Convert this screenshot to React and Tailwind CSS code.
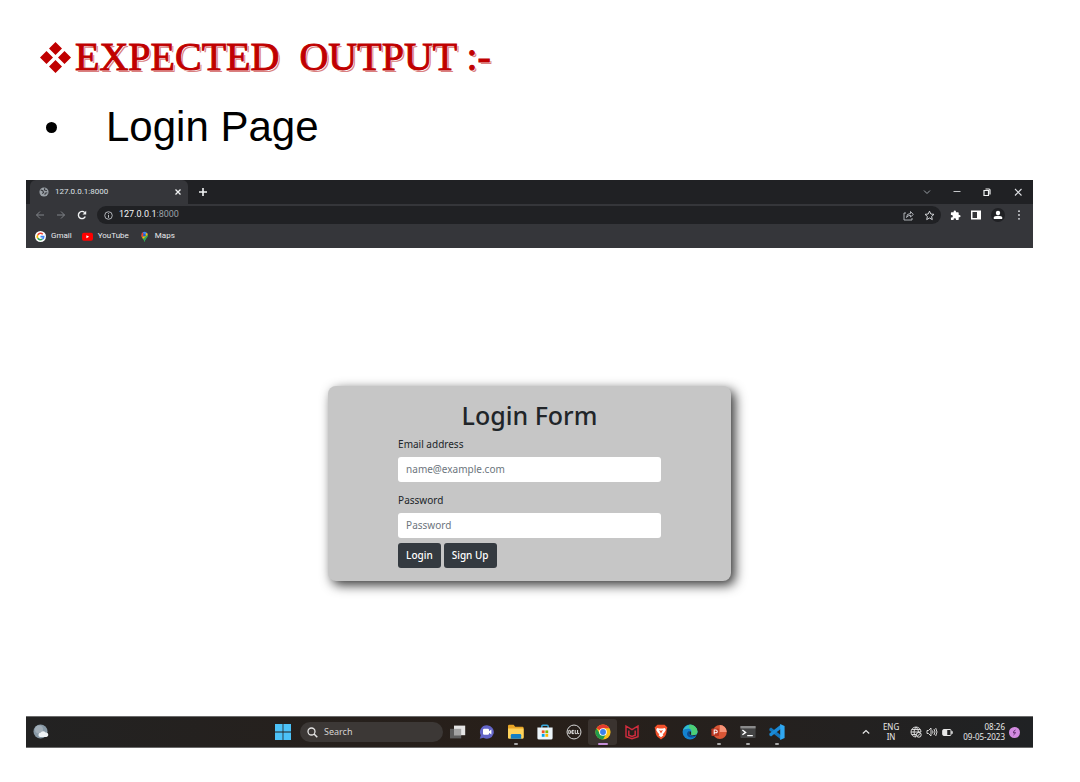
import React from "react";

function Svg({ size = 16, box = 24, children, className = "" }) {
  return (
    <svg width={size} height={size} viewBox={`0 0 ${box} ${box}`} className={`block shrink-0 ${className}`} fill="none" aria-hidden="true">
      {children}
    </svg>
  );
}

function IconButton({ label, className = "", children }) {
  return (
    <button type="button" aria-label={label} className={`flex shrink-0 items-center justify-center ${className}`}>
      {children}
    </button>
  );
}

function Heading() {
  return (
    <header className="pl-[14px]">
      <h1 className="flex items-center gap-1 whitespace-pre font-['Liberation_Serif',serif] text-[40px] leading-[44px] text-[#c00000] [-webkit-text-stroke:1px_#c00000] [text-shadow:1px_1px_0_#fff,2px_2px_0_#d98080]">
        <Svg size={31} box={31}>
          <path fill="#c00000" d="M15.500 0L22 6.500 15.500 13 9 6.500zM6.500 9L13 15.500 6.500 22 0 15.500zM24.500 9L31 15.500 24.500 22 18 15.500zM15.500 18L22 24.500 15.500 31 9 24.500z" />
        </Svg>
        <span>{"EXPECTED  OUTPUT :-"}</span>
      </h1>
      <ul className="mt-6 font-['Liberation_Sans',sans-serif] text-[42px] leading-[48px] text-black">
        <li className="flex items-center gap-[49px] pl-[6px]">
          <span className="size-[11px] rounded-full bg-black" />
          Login Page
        </li>
      </ul>
    </header>
  );
}

function TabStrip() {
  return (
    <div className="flex h-6 items-stretch bg-[#202124] pl-1 text-[#dfe1e5]">
      <div className="flex w-[158px] items-center rounded-t-md bg-[#35363a] pr-[6px] pl-[9px]">
        <Svg size={10}>
          <circle cx="12" cy="12" r="11" fill="#9aa0a6" />
          <path d="M4 7l5 2 2 4-3 3M14 3l-1 4 6 2M20 14l-5 1-1 4" stroke="#35363a" strokeWidth="2.500" />
        </Svg>
        <span className="ml-[6px] flex-1 text-[8px]">127.0.0.1:8000</span>
        <IconButton label="Close tab">
          <Svg size={8} box={8}><path d="M1.500 1.500l5 5M6.500 1.500l-5 5" stroke="#f1f3f4" strokeWidth="1.300" /></Svg>
        </IconButton>
      </div>
      <IconButton label="New tab" className="ml-[10px]">
        <Svg size={10} box={10}><path d="M5 1v8M1 5h8" stroke="#f1f3f4" strokeWidth="1.600" /></Svg>
      </IconButton>
      <div className="ml-auto flex items-center pr-[11px]">
        <IconButton label="Search tabs" className="w-[30px]">
          <Svg size={8} box={8}><path d="M1 2.500l3 3 3-3" stroke="#9aa0a6" /></Svg>
        </IconButton>
        <IconButton label="Minimise" className="w-[30px]">
          <Svg size={8} box={8}><path d="M0.500 3.500h7" stroke="#c4c6c9" /></Svg>
        </IconButton>
        <IconButton label="Restore" className="w-[30px]">
          <Svg size={8} box={8}><path d="M1 2.500h4.500v5H1zM2.500 1h3.500q1 0 1 1v4.500" stroke="#f1f3f4" strokeWidth="1.200" /></Svg>
        </IconButton>
        <IconButton label="Close window" className="ml-[12px] w-2">
          <Svg size={8} box={8}><path d="M1 1l6.500 6.500M7.500 1L1 7.500" stroke="#dfe1e5" strokeWidth="1.100" /></Svg>
        </IconButton>
      </div>
    </div>
  );
}

function Toolbar() {
  return (
    <div className="flex h-[22px] items-center pr-[9px] pl-[9px]">
      <div className="flex w-[62px] justify-between pr-[10px]">
        <IconButton label="Back">
          <Svg size={10} box={10}><path d="M9 5H1.500M5 1.500L1.500 5 5 8.500" stroke="#808388" /></Svg>
        </IconButton>
        <IconButton label="Forward">
          <Svg size={10} box={10}><path d="M1 5h7.500M5 1.500L8.500 5 5 8.500" stroke="#808388" /></Svg>
        </IconButton>
        <IconButton label="Reload">
          <Svg size={10} box={10}>
            <path d="M8.300 6.500A3.600 3.600 0 1 1 7.700 2.600" stroke="#f1f3f4" strokeWidth="1.400" />
            <path d="M9.200 0.800v3.700H5.500z" fill="#f1f3f4" />
          </Svg>
        </IconButton>
      </div>
      <div className="flex h-[18px] min-w-0 flex-1 items-center rounded-full bg-[#202124] pr-[6px] pl-[7px]">
        <Svg size={9} box={10}>
          <circle cx="5" cy="5" r="4.200" stroke="#bdc1c6" />
          <path d="M5 4.500v3M5 2.500v1" stroke="#bdc1c6" strokeWidth="1.100" />
        </Svg>
        <span className="ml-[6px] flex-1 text-[9px] text-[#f1f3f4]">
          127.0.0.1<span className="text-[#9aa0a6]">:8000</span>
        </span>
        <div className="flex items-center gap-[10px]">
          <IconButton label="Share">
            <Svg size={11} box={11}>
              <path d="M3 3H1v7h8V8M3.500 7.500q0-4 4-4V1.500L10.300 4.500 7.500 7V5.300q-2.500 0-4 2.200z" stroke="#bdc1c6" strokeWidth="0.900" />
            </Svg>
          </IconButton>
          <IconButton label="Bookmark">
            <Svg size={11}><path d="M12 2.500l2.900 6.300 6.900.7-5.200 4.600 1.500 6.800-6.100-3.500-6.100 3.500 1.500-6.800L2.200 9.500l6.900-.7z" stroke="#dfe1e5" strokeWidth="2" /></Svg>
          </IconButton>
        </div>
      </div>
      <div className="ml-2 flex items-center gap-[9px]">
        <IconButton label="Extensions" className="w-3">
          <Svg size={11}><path fill="#fff" d="M20.500 11H19V7c0-1.100-.9-2-2-2h-4V3.500a2.500 2.500 0 0 0-5 0V5H4c-1.100 0-2 .9-2 2v3.800h1.500a2.700 2.700 0 0 1 0 5.400H2V20c0 1.100.9 2 2 2h3.800v-1.500a2.700 2.700 0 0 1 5.400 0V22H17c1.100 0 2-.9 2-2v-4h1.500a2.500 2.500 0 0 0 0-5z" /></Svg>
        </IconButton>
        <IconButton label="Side panel" className="w-3">
          <Svg size={10} box={10}><path fill="#fff" fillRule="evenodd" d="M0 0.500h10v9H0zM1.500 2v6H6V2z" /></Svg>
        </IconButton>
        <IconButton label="Profile" className="size-[14px] rounded-full bg-[#202124]">
          <Svg size={10} box={10}><circle cx="5" cy="3" r="2.200" fill="#fff" /><path d="M0.800 9V7.500Q1 5.700 5 5.700T9.200 7.500V9z" fill="#fff" /></Svg>
        </IconButton>
        <IconButton label="Menu" className="w-[10px]">
          <Svg size={10} box={10}><g fill="#dfe1e5"><circle cx="5" cy="1.200" r="0.900" /><circle cx="5" cy="5" r="0.900" /><circle cx="5" cy="8.800" r="0.900" /></g></Svg>
        </IconButton>
      </div>
    </div>
  );
}

function GoogleIcon() {
  return (
    <Svg size={11}>
      <circle cx="12" cy="12" r="12" fill="#fff" />
      <g strokeWidth="3.500">
        <path d="M17 7A7 7 0 0 0 6 8.500" stroke="#ea4335" />
        <path d="M6 8.500a7 7 0 0 0 0 7" stroke="#fbbc05" />
        <path d="M6 15.500A7 7 0 0 0 16 17.700" stroke="#34a853" />
        <path d="M12 12.300h7q0 3.500-2.700 5.400" stroke="#4285f4" />
      </g>
    </Svg>
  );
}

function Bookmarks() {
  return (
    <nav className="flex h-[22px] items-center gap-[10px] pb-[2px] pl-[9px] text-[8px] text-[#e8eaed]">
      <a href="#gmail" className="flex items-center gap-[5px]"><GoogleIcon />Gmail</a>
      <a href="#youtube" className="flex items-center gap-[5px]">
        <Svg size={11}><rect y="4" width="24" height="17" rx="4" fill="#f00" /><path d="M9.500 9v7l6-3.500z" fill="#fff" /></Svg>
        YouTube
      </a>
      <a href="#maps" className="flex items-center gap-[5px]">
        <Svg size={11}>
          <path d="M12 24q-1-4-4-8-3-3-3-7h14q0 4-3 7-3 4-4 8z" fill="#34a853" />
          <path d="M5 9a7.500 8 0 0 1 3-6.500l4 6-5 6Q5 12 5 9z" fill="#ea4335" />
          <path d="M8 2.500a7.500 8 0 0 1 11 5L12 9z" fill="#4285f4" />
          <path d="M7 14.500L17 4q2 2 2 5L9 17.500z" fill="#fbbc04" />
          <path d="M19 7.500q.5 5-3 8.500-3 4-4 8-1-4-3-6.500z" fill="#34a853" />
          <circle cx="12" cy="9" r="2.800" fill="#1967d2" />
        </Svg>
        Maps
      </a>
    </nav>
  );
}

function Field({ id, label, ...props }) {
  return (
    <div>
      <label htmlFor={id} className="block text-[10px] leading-4 text-[#212529]">{label}</label>
      <input
        id={id}
        className="mt-[5px] block h-[25px] w-full rounded-[3px] bg-white px-2 text-[10px] text-[#212529] outline-none placeholder:text-[#6c757d]"
        {...props}
      />
    </div>
  );
}

function LoginForm() {
  const button = "h-[25px] rounded-[3px] bg-[#343a40] px-2 text-[10px] font-medium text-white";
  return (
    <form
      onSubmit={(e) => e.preventDefault()}
      className="w-2/5 min-w-[300px] rounded-lg bg-[#c6c6c6] px-[70px] pt-3 pb-[13px] shadow-[4px_4px_12px_rgba(0,0,0,0.8)]"
    >
      <h2 className="text-center text-[25px] leading-[34px] font-medium text-[#212529]">Login Form</h2>
      <div className="mt-1 flex flex-col gap-[10px]">
        <Field id="email" label="Email address" type="email" placeholder="name@example.com" />
        <Field id="password" label="Password" type="password" placeholder="Password" />
      </div>
      <div className="mt-[5px] flex gap-[3px]">
        <button type="submit" className={button}>Login</button>
        <button type="button" className={button}>Sign Up</button>
      </div>
    </form>
  );
}

const apps = [
  {
    name: "Task view",
    icon: <><rect x="0" y="6" width="14" height="12" fill="#5d5d5d" /><rect x="5" y="2" width="14" height="12" fill="#e4e4e4" /><path d="M5 6h9v8H5z" fill="#a3a3a3" /></>,
  },
  {
    name: "Chat",
    icon: <><path d="M10 1.500a8.500 8.500 0 1 1-4.500 15.700L1 18.500l1.200-4.500A8.500 8.500 0 0 1 10 1.500z" fill="#6264c7" /><rect x="5" y="6" width="7.500" height="7.500" rx="1.500" fill="#fff" /><path d="M12.500 9l3-2v6l-3-2z" fill="#fff" /></>,
  },
  {
    name: "File Explorer", mark: "bg-[#aaa]",
    icon: <><path d="M0 2.500q0-1.500 1.500-1.500H7l2 2.500h9q1.500 0 1.500 1.500v12H0z" fill="#e8a526" /><path d="M0 5.500h19.500V17q0 1.500-1.500 1.500H1.500Q0 18.500 0 17z" fill="#ffd35c" /><path d="M3.500 18.500V14q0-1.500 1.500-1.500h10q1.500 0 1.500 1.500v4.500z" fill="#147fc5" /></>,
  },
  {
    name: "Microsoft Store",
    icon: <><path d="M6 5V3q0-1.500 1.500-1.500h5Q14 1.500 14 3v2" stroke="#3aa9dd" strokeWidth="1.800" /><path d="M0.500 4.500h19v13q0 2-2 2h-15q-2 0-2-2z" fill="#edf5fa" /><path d="M6 8h3.500v3.500H6z" fill="#f05326" /><path d="M10.500 8H14v3.500h-3.500z" fill="#7fba00" /><path d="M6 12.500h3.500V16H6z" fill="#00a4ef" /><path d="M10.500 12.500H14V16h-3.500z" fill="#ffb900" /></>,
  },
  {
    name: "Dell",
    icon: <><circle cx="10" cy="10" r="8.700" stroke="#ddd" strokeWidth="1.200" /><path d="M3.500 8v4h1q1.500 0 1.500-2t-1.500-2zM9.800 8H7.500v4h2.300M7.500 10h2M11.500 7.500V12h2M14.500 7.500V12h2" stroke="#eee" strokeWidth="1.200" /></>,
  },
  {
    name: "Chrome", active: true, mark: "bg-[#c58fd8]",
    icon: <><circle cx="10" cy="10" r="9.500" fill="#fbc116" /><path d="M10 10L1.800 5.200A9.500 9.500 0 0 1 18.200 5.200H10z" fill="#e33b2e" /><path d="M1.800 5.200A9.500 9.500 0 0 0 10 19.500l4-7.200H6.100z" fill="#229b4c" /><circle cx="10" cy="10" r="4.800" fill="#fff" /><circle cx="10" cy="10" r="3.700" fill="#3b82ed" /></>,
  },
  {
    name: "McAfee",
    icon: <path d="M2.500 2.500L10 7l7.500-4.500V16L10 18.500 2.500 16zM6 8v6l4 1.500 4-1.500V8" fill="#202122" stroke="#d12c3c" strokeWidth="1.800" />,
  },
  {
    name: "Brave",
    icon: <><path d="M5.500 1h9l3.500 3.500-1 3q0 6-2.500 8.500L10 19.500 5.500 16Q3 13.500 3 7.500l-1-3z" fill="#f2512b" /><path d="M5 5l3 .5h4l3-.5 1 2.500-2.500 4-1.500 1 1 1.500-3 2.500-3-2.500 1-1.500-1.500-1L4 7.500z" fill="#fff" /><path d="M7.500 7.500L10 12l2.500-4.500-2.500 1z" fill="#f2512b" /></>,
  },
  {
    name: "Edge",
    icon: <><circle cx="10" cy="10" r="9.300" fill="#1482cf" /><path d="M1 8.500A9.300 9.300 0 0 1 19.300 9.500c0 3.500-2.500 4.500-5.500 4.500-2 0-2.800-1-2.300-2C13 8.500 11 6 7.500 6 4 6 1.800 7 1 8.500z" fill="#32bfc9" /><path d="M9 0.800A9.300 9.300 0 0 1 19.300 9.500c0 3.500-2.500 4.500-5.500 4.500-2 0-2.800-1-2.300-2 1.500-4-.5-6-2.500-7z" fill="#4ccf75" /><path d="M9 8.500c-5 3-2.500 8.500 2.500 8.500 3 0 5-1 6.300-2.300-2 1-7 1-8.300-2Q8.800 10.500 9 8.500z" fill="#0d4c94" /><path d="M9.800 8.800q-1.800 4 2 5.700 3.500 1 6.700-.8l-1 2 2.500 1V13l-4 .9q-6.500.6-4.500-2.400 0-2-1.700-2.700z" fill="#221f1d" /></>,
  },
  {
    name: "PowerPoint", mark: "bg-[#aaa]",
    icon: <><circle cx="11" cy="10" r="8.700" fill="#d95635" /><path d="M11 1.300a8.700 8.700 0 0 1 8.700 8.700H11z" fill="#f59377" /><rect x="0.500" y="5.500" width="9.500" height="9.500" rx="1" fill="#b93621" /><path d="M4 13V7.500h2q1.800 0 1.800 1.800T6 11H4" stroke="#fff" strokeWidth="1.300" /></>,
  },
  {
    name: "Terminal", mark: "bg-[#aaa]",
    icon: <><rect x="0.500" y="2.500" width="19" height="15" rx="1" fill="#444" /><path d="M0.500 2.500h19v3h-19z" fill="#8b8b8b" /><path d="M3 7.500l4 3-4 3M9 14.500h7" stroke="#fff" strokeWidth="1.700" /></>,
  },
  {
    name: "Visual Studio Code", mark: "bg-[#aaa]",
    icon: <><path d="M0.500 6l2-1.500L15 14v5.500L0.500 8z" fill="#1376bd" /><path d="M0.500 14l2 1.500L15 6V0.500L0.500 12z" fill="#1a8bd8" /><path d="M14 0l5.500 2.500v15L14 20z" fill="#30a8f2" /></>,
  },
];

function Taskbar() {
  return (
    <footer className="grid h-8 grid-cols-[1fr_auto_1fr] items-center border-y border-[#6b6b6b] bg-[#202122] bg-linear-to-r from-[#222] via-[#281f19] to-[#202224] text-[#e8e8e8]">
      <IconButton label="Weather" className="ml-[7px] w-4">
        <Svg size={16} box={16}><circle cx="7.500" cy="7.500" r="7" fill="#8798a5" /><circle cx="6" cy="5.500" r="4" fill="#a1adb7" /><path d="M7 13a2.200 2.200 0 0 1 .5-4.300 3 3 0 0 1 5-.2 2.300 2.300 0 0 1 1 4.500z" fill="#eef2f5" /></Svg>
      </IconButton>
      <div className="flex items-center">
        <IconButton label="Start" className="w-[30px]">
          <Svg size={16} box={16}><path d="M0 0h7.600v7.600H0zM8.400 0H16v7.600H8.400zM0 8.400h7.600V16H0zM8.400 8.400H16V16H8.400z" fill="#4cc2f8" /></Svg>
        </IconButton>
        <label className="ml-[2px] flex h-5 w-[143px] items-center gap-[6px] rounded-full bg-[#3c3836] pr-2 pl-[7px]">
          <Svg size={11} box={11}><circle cx="4.500" cy="4.500" r="3.500" stroke="#e4e4e4" strokeWidth="1.300" /><path d="M7 7l3.300 3.300" stroke="#e4e4e4" strokeWidth="1.500" /></Svg>
          <input aria-label="Search" placeholder="Search" className="w-full min-w-0 bg-transparent text-[9px] outline-none placeholder:text-[#d6d3d1]" />
        </label>
        {apps.map((app) => (
          <button key={app.name} type="button" aria-label={app.name} className={`relative flex h-[26px] w-[29px] items-center justify-center rounded-[3px] ${app.active ? "bg-[#3a332f]" : ""}`}>
            <Svg size={16} box={20}>{app.icon}</Svg>
            {app.mark && <span className={`absolute bottom-0 left-1/2 h-[2px] -translate-x-1/2 rounded-full ${app.active ? "w-[10px]" : "w-1"} ${app.mark}`} />}
          </button>
        ))}
      </div>
      <div className="flex items-center justify-end pr-[13px] text-[8px] leading-[10px]">
        <IconButton label="Hidden icons" className="mr-[13px]">
          <Svg size={8} box={8}><path d="M0.800 5.500L4 2.500l3.200 3" stroke="#e8e8e8" strokeWidth="1.200" /></Svg>
        </IconButton>
        <span className="mr-[11px] text-center">ENG<br />IN</span>
        <div className="mr-[10px] flex items-center gap-1">
          <Svg size={12} box={12}>
            <path d="M11 6A5 5 0 1 0 6 11M1 6h10M1.800 3.500h8.400M1.800 8.500H6M6 1Q2 6 6 11M6 1q2.500 2.500 2.500 5" stroke="#e8e8e8" strokeWidth="0.900" />
            <circle cx="8.800" cy="8.800" r="2.400" stroke="#e8e8e8" /><path d="M7.300 10.300l3-3" stroke="#e8e8e8" />
          </Svg>
          <Svg size={12} box={12}><path d="M1 4.500h1.500L5 2v8L2.500 7.500H1zM6.500 4.500q1 1.500 0 3M8 3q2 3 0 6M9.700 2q2.600 4 0 8" stroke="#e8e8e8" strokeWidth="0.900" /></Svg>
          <Svg size={11} box={11}><rect x="0.700" y="2.500" width="8.300" height="6" rx="1" stroke="#e8e8e8" /><path d="M1 3h4v5H1zM9.500 4.500h1v2h-1z" fill="#e8e8e8" stroke="#e8e8e8" strokeWidth="0.500" /></Svg>
        </div>
        <span className="mr-[4px] text-right">08:26<br />09-05-2023</span>
        <span className="flex size-[11px] items-center justify-center rounded-full bg-[#d28be0]">
          <Svg size={7} box={7}><path d="M4.500 1Q2 2 2.500 4l2-.5Q4 5 2.500 6" stroke="#63306f" /></Svg>
        </span>
      </div>
    </footer>
  );
}

export default function App() {
  return (
    <main className="min-h-screen bg-white pt-[35px] pr-[47px] pb-[34px] pl-[26px]">
      <Heading />
      <section className="mt-[29px] font-['Noto_Sans',sans-serif]">
        <div className="bg-[#35363a] font-[Roboto,sans-serif]">
          <TabStrip />
          <Toolbar />
          <Bookmarks />
        </div>
        <div className="flex min-h-[468px] items-center justify-center pt-[2px]">
          <LoginForm />
        </div>
        <Taskbar />
      </section>
    </main>
  );
}
